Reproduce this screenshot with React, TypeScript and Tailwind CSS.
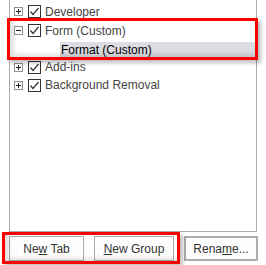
import React from 'react';

function Expander({ open }: { open?: boolean }) {
  return (
    <svg width="9" height="9" viewBox="0 0 9 9" className="shrink-0">
      <rect x="0.5" y="0.5" width="8" height="8" fill="#fff" stroke="#919191" />
      <line x1="2" y1="4.5" x2="7" y2="4.5" stroke="#222" />
      {!open && <line x1="4.5" y1="2" x2="4.5" y2="7" stroke="#222" />}
    </svg>
  );
}

function Check() {
  return (
    <svg width="13" height="13" viewBox="0 0 13 13" className="shrink-0">
      <rect x="0.5" y="0.5" width="12" height="12" fill="#fff" stroke="#333" />
      <polyline points="2.5,6.5 5,9.5 10.5,3" fill="none" stroke="#333" strokeWidth="1.2" />
    </svg>
  );
}

function Row({ label, open, h }: { label: string; open?: boolean; h: string }) {
  return (
    <div className={`flex items-center ${h}`}>
      <div className="w-[4px]" />
      <Expander open={open} />
      <div className="w-[5px]" />
      <Check />
      <span className="ml-[4px] text-[12px] text-[#444]">{label}</span>
    </div>
  );
}

export default function App() {
  return (
    <div
      className="relative w-[266px] h-[265px] bg-white overflow-hidden"
      style={{ fontFamily: '"Liberation Sans", Arial, sans-serif' }}
    >
      <div className="ml-[9px] w-[248px] h-[232px] border-x border-b border-[#adadad] pt-[2px]">
        <Row label="Developer" h="h-[19px]" />
        <Row label="Form (Custom)" open h="h-[19px]" />
        <div className="mt-[2px] ml-[50px] h-[16px] bg-[#dcdce3] flex items-center pl-[1px]">
          <span className="text-[12px] text-black">Format (Custom)</span>
        </div>
        <Row label="Add-ins" h="h-[18px]" />
        <Row label="Background Removal" h="h-[18px]" />
      </div>

      <div className="flex mt-[4px] ml-[9px] gap-[10px] text-[12px] text-[#333]">
        <button className="w-[75px] h-[25px] border border-[#adadad] bg-[#fdfdfd]">
          Ne<u>w</u> Tab
        </button>
        <button className="w-[80px] h-[25px] border border-[#adadad] bg-[#fdfdfd]">
          <u>N</u>ew Group
        </button>
        <button className="w-[74px] h-[25px] border-2 border-[#adadad] bg-[#fdfdfd]">
          Rena<u>m</u>e...
        </button>
      </div>

      <div className="absolute left-[7px] top-[18px] w-[251px] h-[42px] border-[3px] border-[#ff0000] shadow-[3px_3px_4px_rgba(0,0,0,0.25),inset_4px_-3px_4px_rgba(0,0,0,0.12)]" />
      <div className="absolute left-[2px] top-[232px] w-[178px] h-[32px] border-[3px] border-[#ff0000] shadow-[3px_3px_4px_rgba(0,0,0,0.25),inset_4px_-3px_4px_rgba(0,0,0,0.12)]" />
    </div>
  );
}
